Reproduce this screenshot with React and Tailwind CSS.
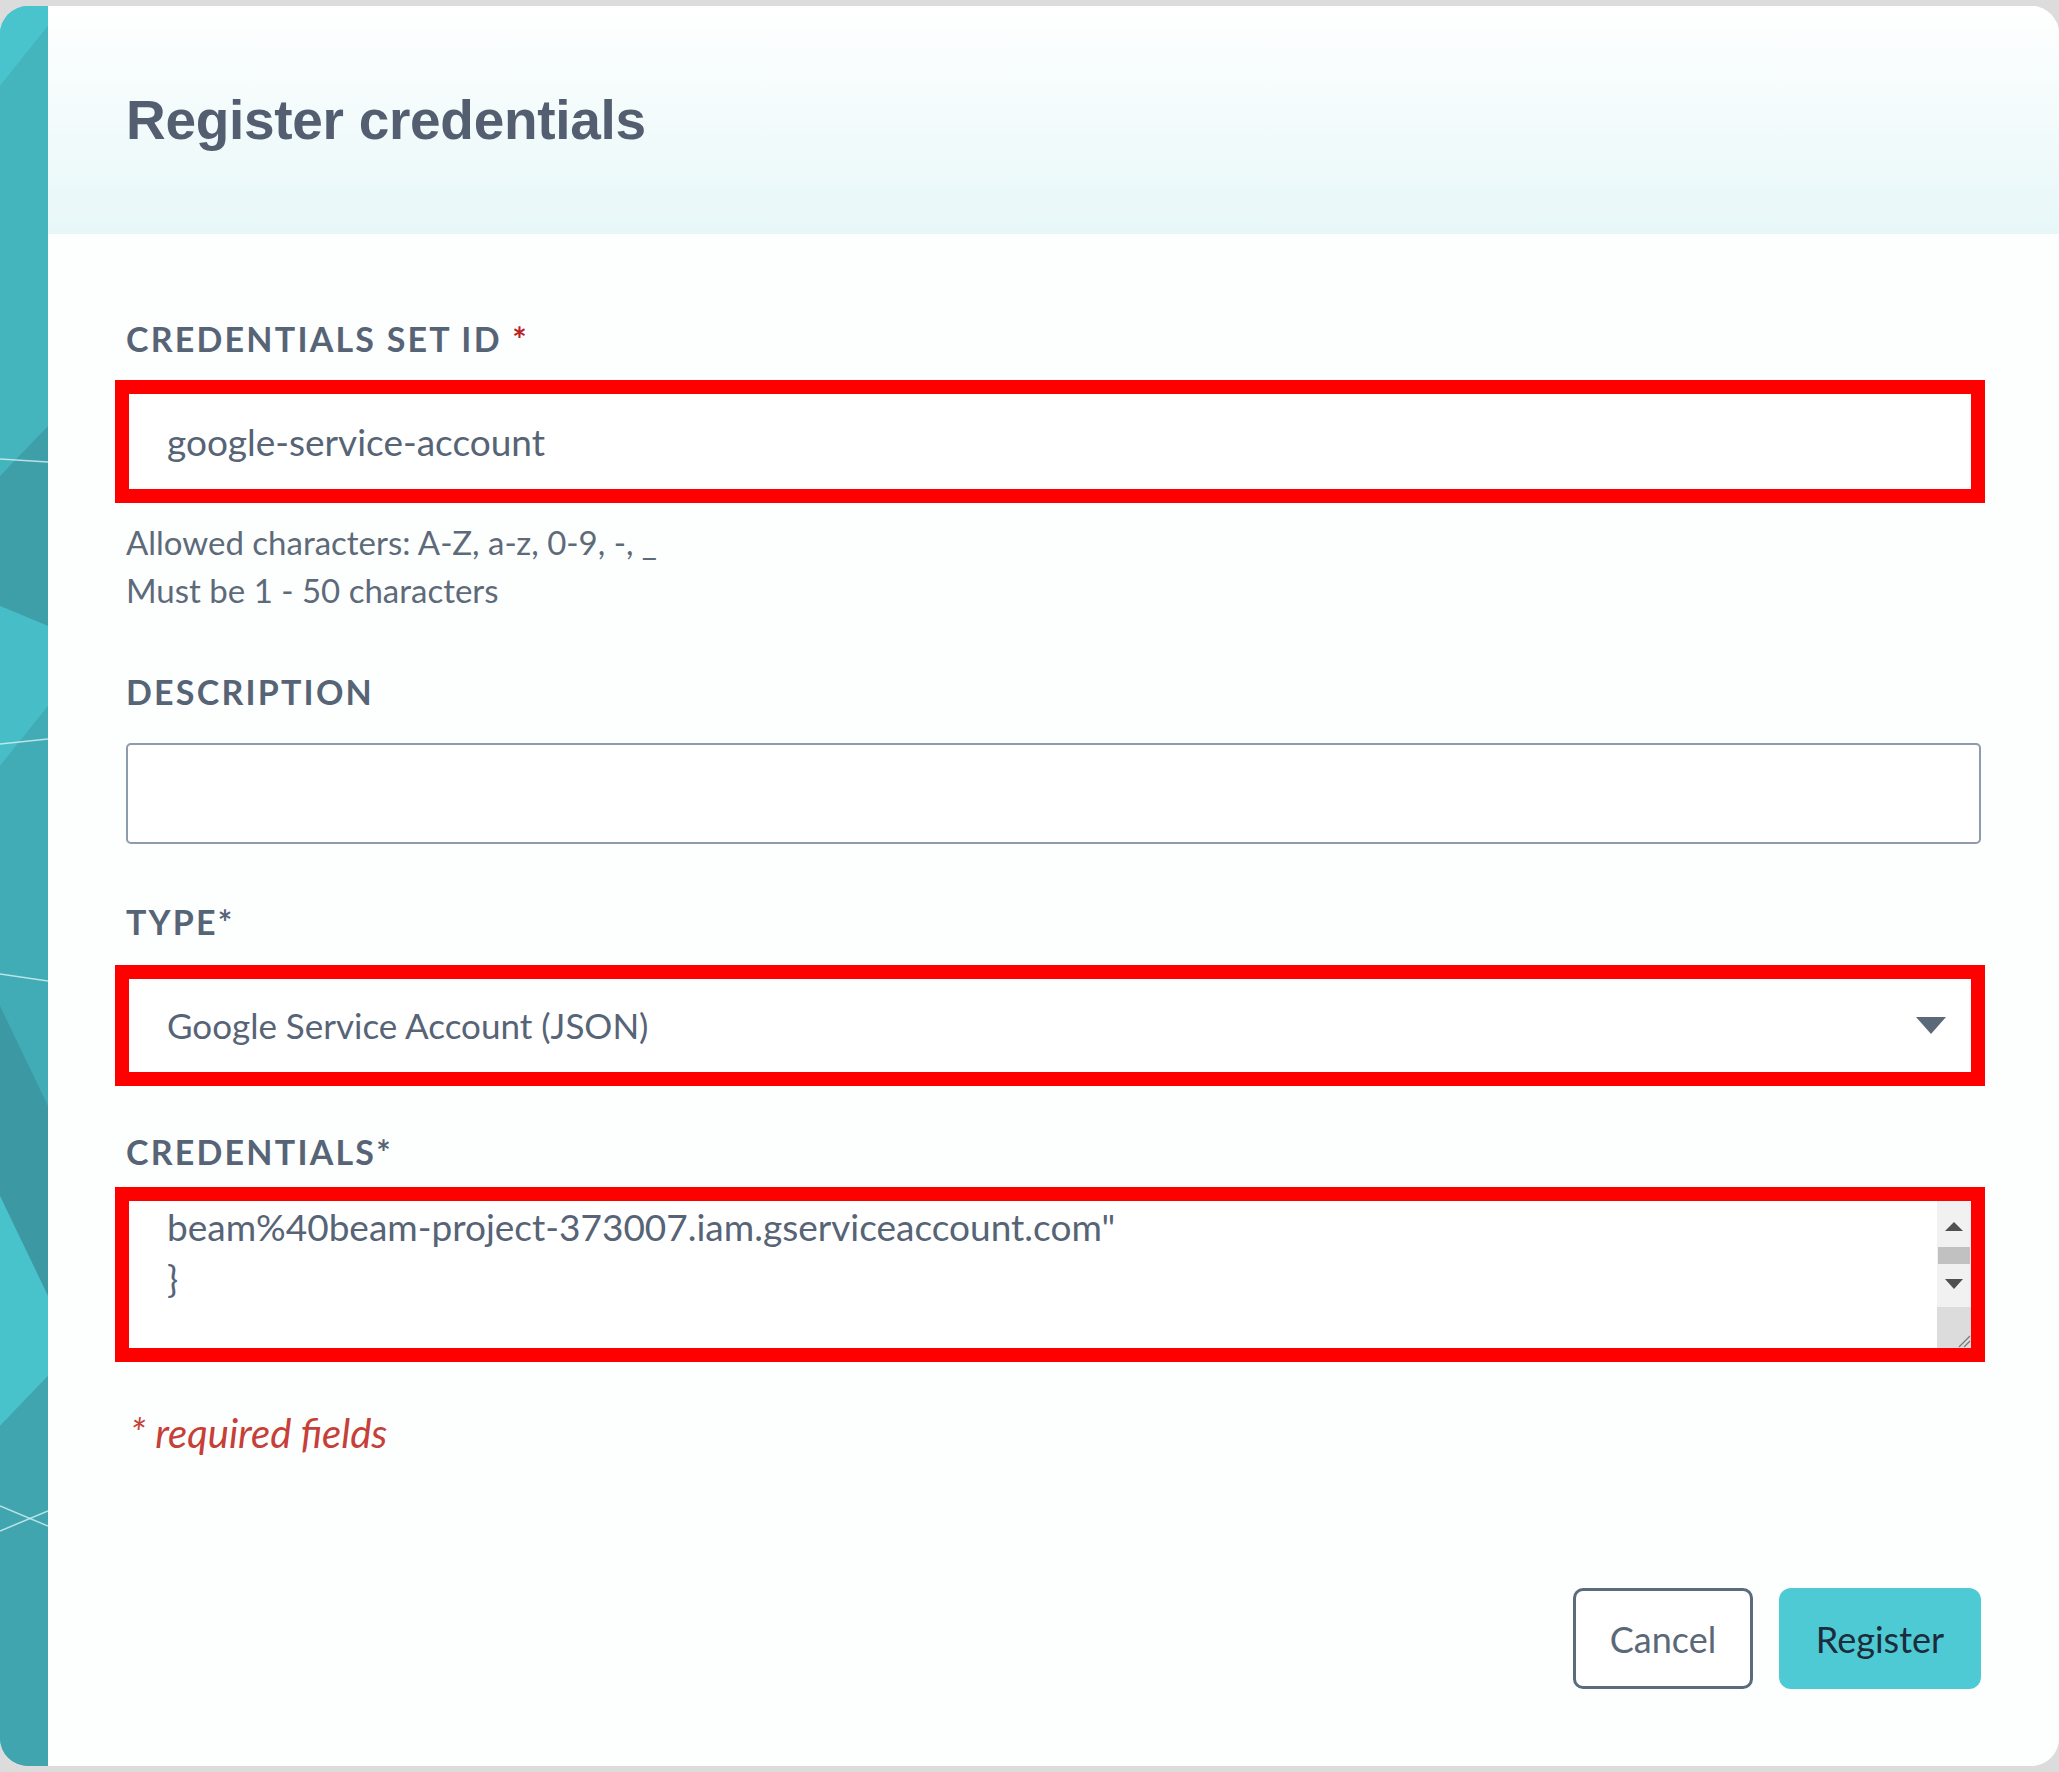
import React from 'react';

const labelCls =
  "font-['Lato',sans-serif] text-[34px] leading-[40px] font-bold uppercase tracking-[0.065em] text-[#566476]";
const fieldText = "font-['Lato',sans-serif] text-[37px] text-[#566476]";

function SidePanel() {
  return (
    <svg viewBox="0 0 48 1760" preserveAspectRatio="none" className="h-full w-full">
      <defs>
        <linearGradient id="tealA" x1="0" y1="0" x2="0" y2="1">
          <stop offset="0" stopColor="#47bec7" />
          <stop offset="1" stopColor="#3d9ea8" />
        </linearGradient>
      </defs>
      <rect width="48" height="1760" fill="url(#tealA)" />
      <polygon points="0,0 48,0 48,20 0,80" fill="#49c3cc" />
      <polygon points="0,80 48,20 48,420 0,470" fill="#44b4bd" />
      <polygon points="0,470 48,420 48,620 0,600" fill="#3e9fa9" />
      <polygon points="0,600 48,620 48,700 0,760" fill="#47bec7" />
      <polygon points="0,760 48,700 48,1100 0,1000" fill="#42acb6" />
      <polygon points="0,1000 48,1100 48,1290 0,1190" fill="#3c99a4" />
      <polygon points="0,1190 48,1290 48,1370 0,1420" fill="#48c2cb" />
      <polygon points="0,1420 48,1370 48,1760 0,1760" fill="#40a5af" />
      <line x1="0" y1="453" x2="48" y2="456" stroke="#d7f3f5" strokeWidth="1.5" opacity="0.8" />
      <line x1="0" y1="738" x2="48" y2="733" stroke="#d7f3f5" strokeWidth="1.5" opacity="0.8" />
      <line x1="0" y1="968" x2="48" y2="975" stroke="#d7f3f5" strokeWidth="1.5" opacity="0.8" />
      <line x1="0" y1="1500" x2="48" y2="1520" stroke="#d7f3f5" strokeWidth="1.5" opacity="0.8" />
      <line x1="0" y1="1525" x2="48" y2="1505" stroke="#d7f3f5" strokeWidth="1.5" opacity="0.8" />
    </svg>
  );
}

function RedBox({ className = '', children }) {
  return (
    <div className={`ml-[-11px] mr-[-4px] border-[14px] border-[#ff0000] bg-white ${className}`}>
      {children}
    </div>
  );
}

export default function App() {
  return (
    <div className="min-h-[1772px] w-full bg-[#dcdcdc] py-[6px]">
      <div className="flex h-[1760px] overflow-hidden rounded-[28px] bg-white">
        <div className="w-[48px] shrink-0">
          <SidePanel />
        </div>

        <div className="flex flex-1 flex-col bg-[#fdfefe]">
          {/* header */}
          <div className="flex h-[228px] items-center bg-gradient-to-b from-white to-[#e7f7f8] pl-[78px]">
            <h1 className="font-['Liberation_Sans',Arial,sans-serif] text-[55px] font-bold tracking-[-0.3px] text-[#535f70]">
              Register credentials
            </h1>
          </div>

          {/* form */}
          <div className="flex flex-1 flex-col px-[78px] pt-[85px]">
            <div className={labelCls}>
              Credentials set ID <span className="text-[#b8241f]">*</span>
            </div>
            <RedBox className="mt-[21px] flex h-[123px] items-center pl-[38px]">
              <span className={fieldText}>google-service-account</span>
            </RedBox>
            <div className="mt-[15px] font-['Lato',sans-serif] text-[33px] leading-[48px] text-[#5d6a7a]">
              <div>Allowed characters: A-Z, a-z, 0-9, -, _</div>
              <div>Must be 1 - 50 characters</div>
            </div>

            <div className={`mt-[58px] ${labelCls}`}>Description</div>
            <div className="mt-[31px] h-[101px] rounded-[5px] border-2 border-[#8d9bab] bg-white" />

            <div className={`mt-[58px] ${labelCls}`}>Type*</div>
            <RedBox className="mt-[23px] flex h-[121px] items-center justify-between pl-[38px] pr-[25px]">
              <span className="font-['Lato',sans-serif] text-[35px] text-[#566476]">Google Service Account (JSON)</span>
              <span className="h-0 w-0 border-x-[15px] border-t-[17px] border-x-transparent border-t-[#5b6978]" />
            </RedBox>

            <div className={`mt-[46px] ${labelCls}`}>Credentials*</div>
            <RedBox className="mt-[15px] flex h-[175px]">
              <div className={`flex-1 pl-[38px] leading-[52px] ${fieldText}`}>
                <div>beam%40beam-project-373007.iam.gserviceaccount.com"</div>
                <div>{'}'}</div>
              </div>
              <div className="flex w-[34px] flex-col">
                <div className="flex h-[106px] flex-col items-center bg-[#f1f1f1]">
                  <span className="mt-[21px] h-0 w-0 border-x-[9px] border-b-[9px] border-x-transparent border-b-[#505050]" />
                  <div className="mt-[16px] h-[17px] w-[32px] bg-[#c1c1c1]" />
                  <span className="mt-[15px] h-0 w-0 border-x-[9px] border-t-[10px] border-x-transparent border-t-[#505050]" />
                </div>
                <div className="relative flex-1 bg-[#dcdcdc]">
                  <svg viewBox="0 0 14 14" className="absolute bottom-0 right-0 h-[14px] w-[14px]">
                    <line x1="2" y1="13" x2="13" y2="2" stroke="#777" strokeWidth="1.2" />
                    <line x1="7" y1="13" x2="13" y2="7" stroke="#777" strokeWidth="1.2" />
                  </svg>
                </div>
              </div>
            </RedBox>

            <div className="mt-[51px] pl-[4px] font-['Lato',sans-serif] text-[40px] italic leading-[40px] text-[#c63f38]">
              * required fields
            </div>

            <div className="mt-[135px] flex justify-end gap-[26px]">
              <button className="flex h-[101px] w-[180px] items-center justify-center rounded-[10px] border-[3px] border-[#5c6b7c] bg-white font-['Lato',sans-serif] text-[36px] text-[#5a6878]">
                Cancel
              </button>
              <button className="flex h-[101px] w-[202px] items-center justify-center rounded-[12px] bg-[#4ecad5] font-['Lato',sans-serif] text-[36px] text-[#1c2c3a]">
                Register
              </button>
            </div>
          </div>
        </div>
      </div>
    </div>
  );
}
